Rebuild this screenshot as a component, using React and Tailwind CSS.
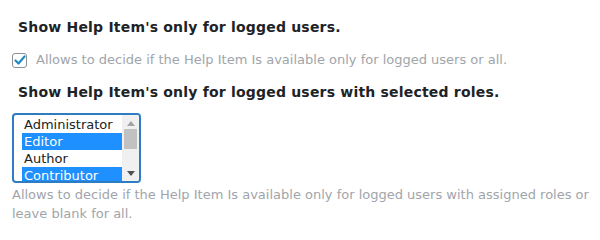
import React from 'react';

const roles = [
  { name: 'Administrator', selected: false },
  { name: 'Editor', selected: true },
  { name: 'Author', selected: false },
  { name: 'Contributor', selected: true },
];

function RoleList() {
  return (
    <div className="flex w-[129px] h-[70px] border-2 border-[#2f7cc2] rounded-[4px] overflow-hidden bg-white">
      <div className="flex-1 pl-[8px] pt-[1px]">
        {roles.map((r) => (
          <div
            key={r.name}
            className={
              'h-[17px] leading-[17px] pl-[2px] text-[13px] ' +
              (r.selected ? 'bg-[#1e90ff] text-white' : 'text-[#222]')
            }
          >
            {r.name}
          </div>
        ))}
      </div>
      <div className="w-[17px] bg-[#f0f0f0] flex flex-col items-center">
        <div className="h-[11px] flex items-end justify-center">
          <svg width="8" height="5" viewBox="0 0 8 5"><path d="M4 0 L8 5 L0 5 Z" fill="#a3a3a3" /></svg>
        </div>
        <div className="mt-[3px] w-[13px] h-[20px] bg-[#c1c1c1]" />
        <div className="flex-1" />
        <div className="h-[12px] flex items-start justify-center pt-[2px]">
          <svg width="8" height="5" viewBox="0 0 8 5"><path d="M0 0 L8 0 L4 5 Z" fill="#505050" /></svg>
        </div>
      </div>
    </div>
  );
}

export default function App() {
  return (
    <div className="w-[600px] h-[240px] bg-white font-['DejaVu_Sans',sans-serif] pl-[12px] pt-[18px]">
      <h3 className="pl-[6px] text-[14px] tracking-[0.2px] font-bold text-[#1d2327] leading-[18px]">
        Show Help Item's only for logged users.
      </h3>

      <label className="flex items-center gap-[9px] mt-[15px]">
        <span className="w-[15px] h-[15px] border border-[#8c8f94] rounded-[3px] flex items-center justify-center bg-white">
          <svg width="12" height="11" viewBox="0 0 12 11">
            <path d="M1.5 5.5 L4.5 8.5 L10.5 1.5" fill="none" stroke="#1e8cbe" strokeWidth="2.2" strokeLinecap="round" strokeLinejoin="round" />
          </svg>
        </span>
        <span className="text-[13px] leading-[18px] text-[#a0a5aa]">
          Allows to decide if the Help Item Is available only for logged users or all.
        </span>
      </label>

      <h3 className="pl-[6px] mt-[14px] text-[14px] tracking-[0.2px] font-bold text-[#1d2327] leading-[18px]">
        Show Help Item's only for logged users with selected roles.
      </h3>

      <div className="mt-[12px]">
        <RoleList />
      </div>

      <p className="mt-[2px] pr-[4px] text-[13px] leading-[19px] text-[#a0a5aa]">
        Allows to decide if the Help Item Is available only for logged users with assigned roles or leave blank for all.
      </p>
    </div>
  );
}
